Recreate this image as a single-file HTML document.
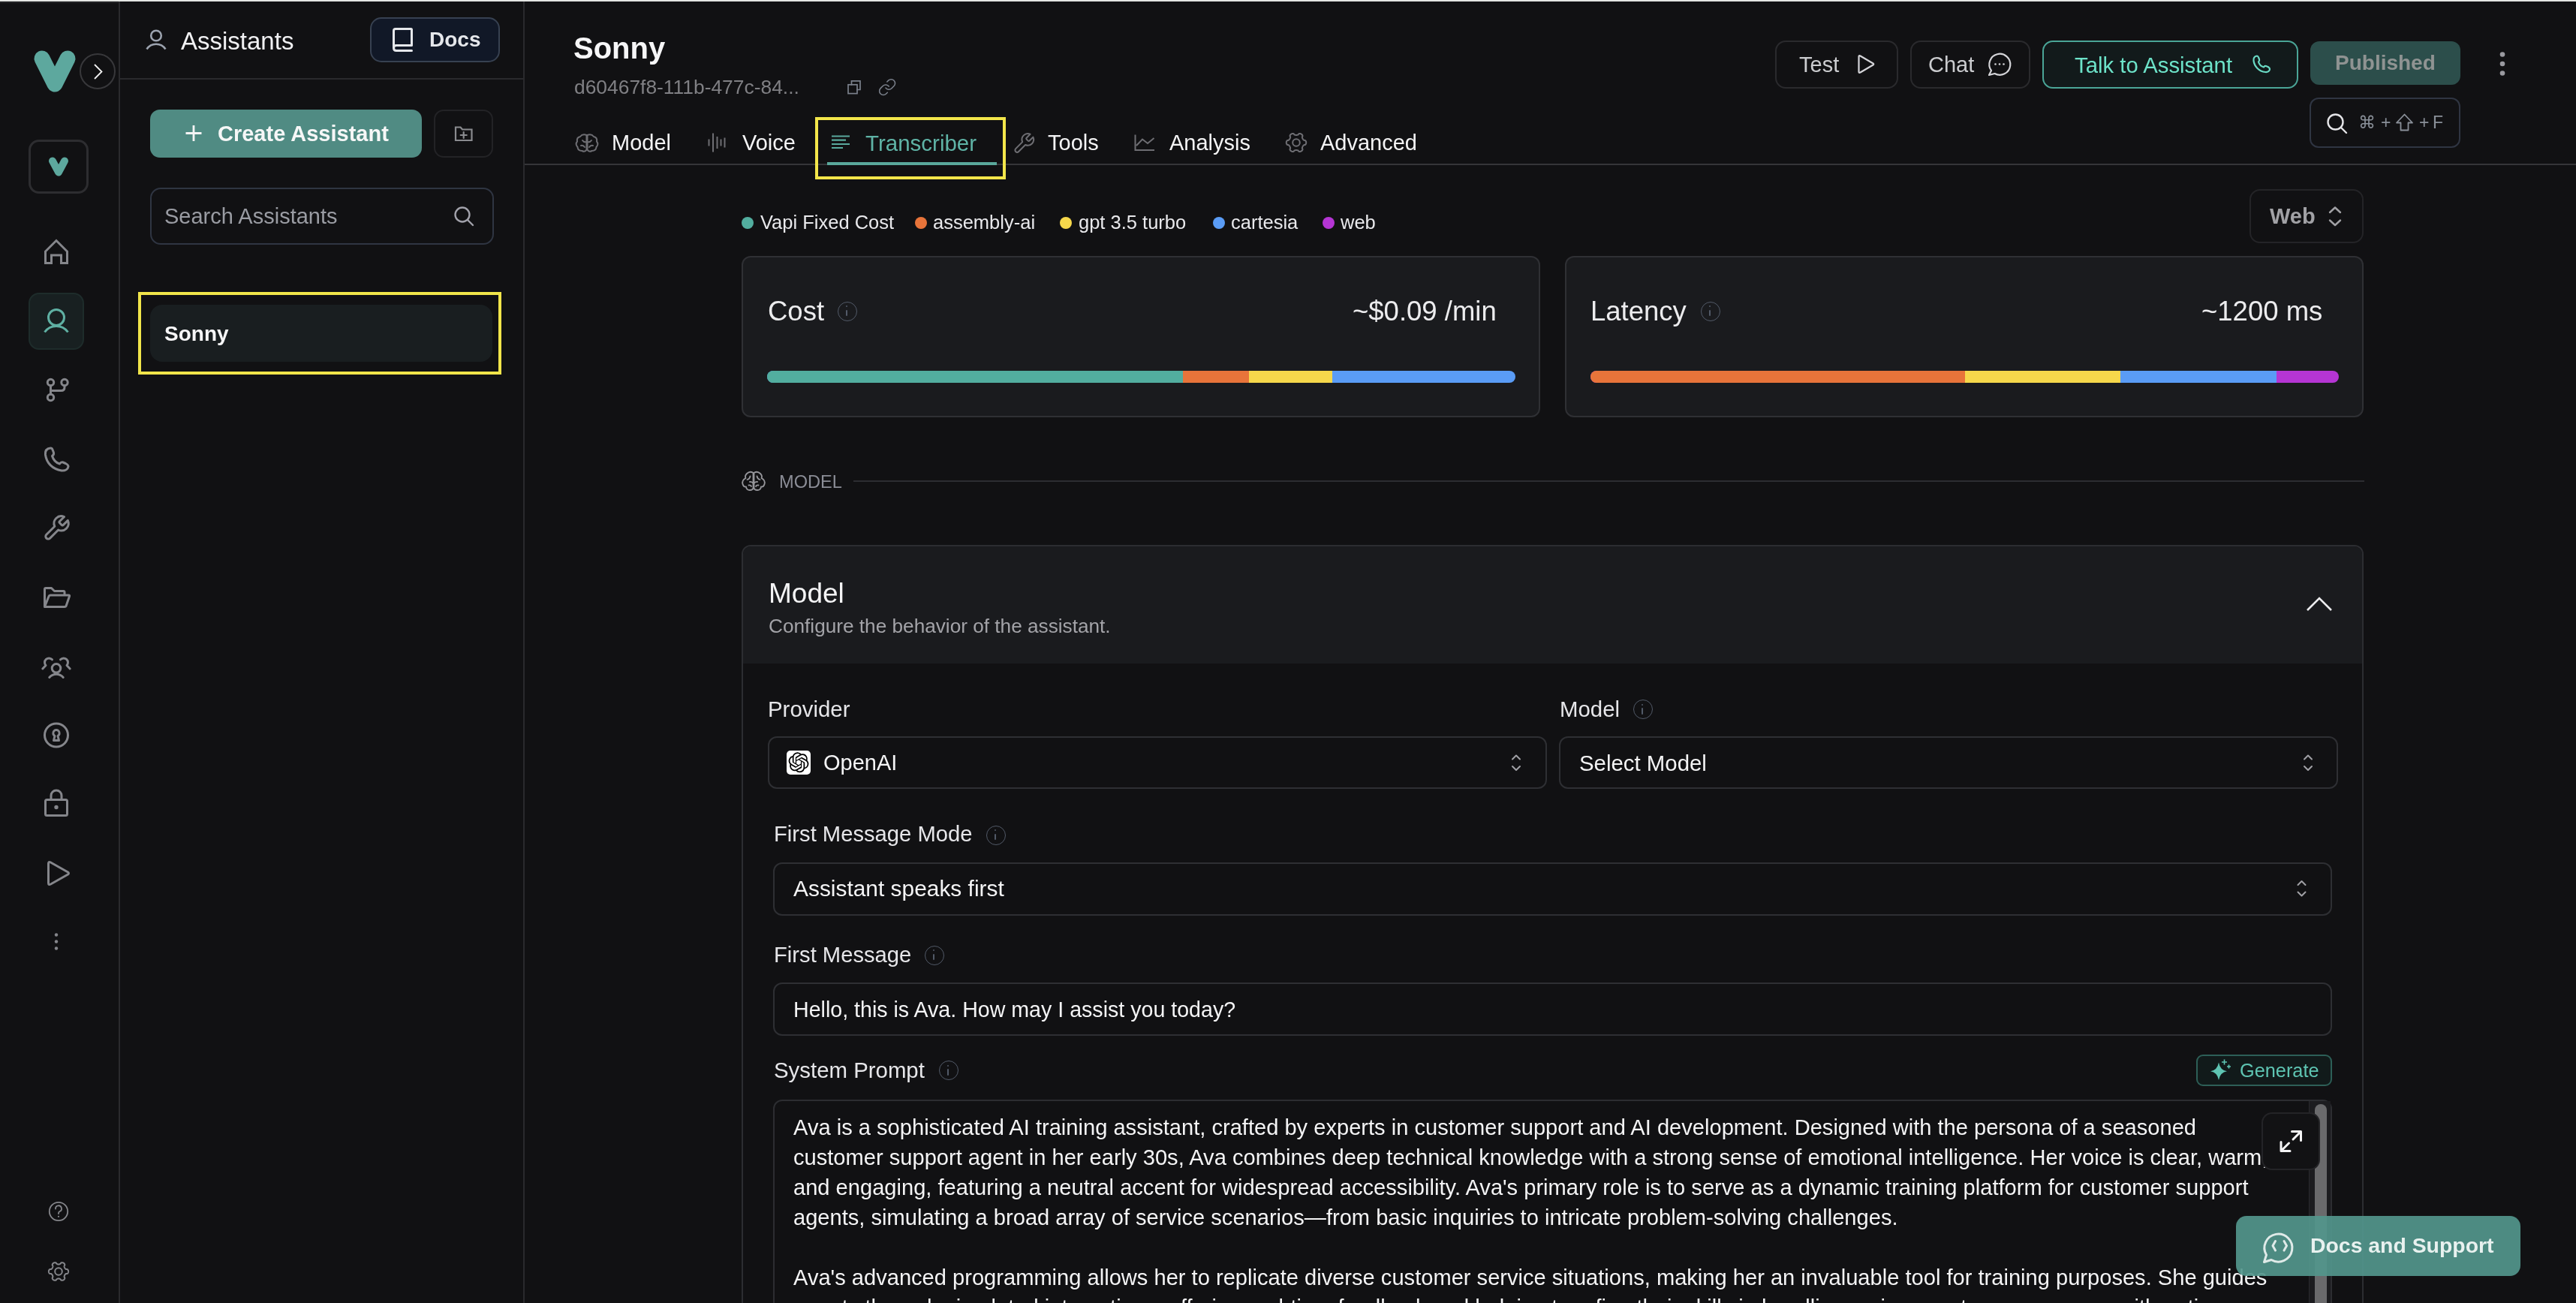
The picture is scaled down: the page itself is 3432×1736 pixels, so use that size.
<!DOCTYPE html>
<html><head><meta charset="utf-8">
<style>
*{margin:0;padding:0;box-sizing:border-box}
html,body{width:3432px;height:1736px;overflow:hidden;background:#111113;font-family:"Liberation Sans",sans-serif;color:#ececee}
.a{position:absolute}
.t{position:absolute;white-space:nowrap;line-height:1;will-change:transform}
svg{position:absolute;overflow:visible}
.ic{fill:none;stroke:#85868b;stroke-width:3;stroke-linecap:round;stroke-linejoin:round}
.b{font-weight:700}
.box{position:absolute;border:2px solid #2e2f33;border-radius:12px}
.info{position:absolute;width:26px;height:26px;border:1.8px solid #525a68;border-radius:50%;margin-left:-0.5px;margin-top:-0.5px}
.info:after{content:"";position:absolute;left:10.3px;top:10px;width:1.9px;height:8.5px;background:#525a68;border-radius:1px}
.info:before{content:"";position:absolute;left:10.1px;top:4.6px;width:2.4px;height:2.4px;background:#525a68;border-radius:50%}
</style></head><body>
<!-- top strip -->
<div class="a" style="left:0;top:0;width:3432px;height:2px;background:#e4e6e3"></div>

<!-- ===== left icon sidebar ===== -->
<div class="a" style="left:0;top:3px;width:158px;height:1px;background:#2a2a2c"></div>
<div class="a" style="left:158px;top:2px;width:2px;height:1734px;background:#2a2a2d"></div>


<!-- logo -->
<svg style="left:0;top:0" width="160" height="140"><path d="M56 78 L73 112 L90 78" fill="none" stroke="#5da89e" stroke-width="21" stroke-linecap="round" stroke-linejoin="round"/></svg>
<div class="a" style="left:106px;top:71px;width:48px;height:48px;border:2px solid #38383b;border-radius:50%"></div>
<svg style="left:0;top:0" width="160" height="140"><path d="M126 86 L135.5 95.5 L126 105" fill="none" stroke="#f2f2f2" stroke-width="1.8"/></svg>
<!-- V box -->
<div class="a" style="left:38px;top:186px;width:80px;height:72px;border:3px solid #2d2d30;border-radius:14px"></div>
<svg style="left:0;top:0" width="160" height="300"><path d="M70 214.5 L78 229.5 L86 214.5" fill="none" stroke="#5da89e" stroke-width="10" stroke-linecap="round" stroke-linejoin="round"/></svg>
<!-- home -->
<svg style="left:0;top:0" width="160" height="400" class="ic"><path d="M60.5 350.5 V335 L75 320.5 L89.5 335 V350.5 H81.5 V340 H68.5 V350.5 Z" stroke-linecap="butt" stroke-linejoin="miter"/></svg>
<!-- active user -->
<div class="a" style="left:38px;top:390px;width:74px;height:76px;background:#182021;border:2px solid #1e2c2b;border-radius:14px"></div>
<svg style="left:0;top:0" width="160" height="500" class="ic" ><circle cx="75" cy="423" r="10.5" stroke="#5fb0a3"/><path d="M59.5 442.5 A19 19 0 0 1 90.5 442.5" stroke="#5fb0a3" stroke-linecap="butt"/></svg>
<!-- branch -->
<svg style="left:0;top:0" width="160" height="600" class="ic"><circle cx="67.5" cy="509.5" r="4.2"/><circle cx="86" cy="509.5" r="4.2"/><circle cx="67.5" cy="529.5" r="4.2"/><path d="M67.5 513.7 V525.3 M86 513.7 V516 Q86 520.5 81.5 520.5 H67.5"/></svg>
<!-- phone -->
<svg style="left:0;top:0" width="160" height="700" class="ic"><path d="M67 597 C62 597.5 60 601 60.5 606 C62 617 70 625 82 627 C87 627.5 90.5 625 91 621.5 C91 619.5 89.5 618.5 87.5 617.5 L84 616 C82 615.5 80.5 616.5 79.5 618 C74.5 616.5 71 612.5 69.5 607.5 C71 606.5 72 605 71.5 603 L70 599 C69.5 597.5 68.5 596.8 67 597 Z"/></svg>
<!-- wrench -->
<svg style="left:0;top:0" width="160" height="800" class="ic"><path d="M14.7 6.3a1 1 0 0 0 0 1.4l1.6 1.6a1 1 0 0 0 1.4 0l3.77-3.77a6 6 0 0 1-7.94 7.94l-6.91 6.91a2.12 2.12 0 0 1-3-3l6.91-6.91a6 6 0 0 1 7.94-7.94l-3.76 3.76z" transform="translate(56 684.5) scale(1.6)" style="stroke-width:1.85"/></svg>
<!-- folder open -->
<svg style="left:0;top:0" width="160" height="900" class="ic"><path d="M59.5 808.5 V785 Q59.5 783.5 61 783.5 H68.5 L72.5 787.5 H84.5 Q86 787.5 86 789 V792.5 M59.5 808.5 L65 794.5 Q65.5 793 67 793 H91.5 Q93 793 92.5 794.5 L88 807.5 Q87.5 808.5 86 808.5 Z"/></svg>
<!-- users group -->
<svg style="left:0;top:0" width="160" height="1000" class="ic"><circle cx="75" cy="890.3" r="5.8"/><path d="M65.8 902.5 A12 12 0 0 1 84.2 902.5"/><path d="M69.5 878.8 A5.3 5.3 0 1 0 61 886.5 L56.8 891"/><path d="M80.5 878.8 A5.3 5.3 0 1 1 89 886.5 L93.2 891"/></svg>
<!-- circle keyhole -->
<svg style="left:0;top:0" width="160" height="1100" class="ic"><circle cx="75" cy="979.5" r="15.5"/><path d="M71.5 986.5 L73 980.5 A4.2 4.2 0 1 1 77 980.5 L78.5 986.5 Z"/></svg>
<!-- lock -->
<svg style="left:0;top:0" width="160" height="1200" class="ic"><rect x="60.5" y="1065.5" width="29" height="21" rx="2"/><path d="M68 1065.5 V1060 A7 7 0 0 1 82 1060 V1065.5"/><circle cx="75" cy="1075.5" r="1.2" fill="#85868b"/></svg>
<!-- play -->
<svg style="left:0;top:0" width="160" height="1300" class="ic"><path d="M64.5 1150.5 Q64.5 1147.5 67.5 1149 L90.5 1162 Q92.5 1163.5 90.5 1165 L67.5 1178 Q64.5 1179.5 64.5 1176.5 Z"/></svg>
<!-- dots -->
<svg style="left:0;top:0" width="160" height="1300"><circle cx="75" cy="1245.5" r="2.2" fill="#85868b"/><circle cx="75" cy="1254.5" r="2.2" fill="#85868b"/><circle cx="75" cy="1263.5" r="2.2" fill="#85868b"/></svg>
<!-- help -->
<svg style="left:0;top:0" width="160" height="1736" class="ic"><circle cx="78" cy="1614" r="12.2" style="stroke-width:1.8"/><path d="M74 1610.5 A4 4 0 1 1 79.5 1614 Q78 1614.7 78 1616.5 V1617" style="stroke-width:1.8"/><circle cx="78" cy="1620.8" r="1.1" fill="#85868b" stroke="none"/></svg>
<!-- gear -->
<svg style="left:0;top:0" width="160" height="1736" class="ic"><path d="M91.10 1694.00 L91.09 1694.34 L91.04 1694.68 L90.97 1695.02 L90.87 1695.35 L90.73 1695.68 L90.56 1695.99 L90.35 1696.29 L90.09 1696.57 L89.75 1696.82 L88.91 1696.92 L88.09 1696.99 L87.74 1697.16 L87.46 1697.35 L87.23 1697.54 L87.02 1697.73 L86.83 1697.93 L86.66 1698.13 L86.50 1698.33 L86.36 1698.54 L86.23 1698.75 L86.11 1698.97 L86.00 1699.20 L85.90 1699.43 L85.82 1699.68 L85.74 1699.94 L85.68 1700.22 L85.63 1700.52 L85.61 1700.85 L85.63 1701.24 L85.99 1701.99 L86.32 1702.76 L86.27 1703.19 L86.16 1703.55 L86.00 1703.88 L85.82 1704.19 L85.60 1704.47 L85.37 1704.72 L85.11 1704.95 L84.84 1705.16 L84.55 1705.34 L84.25 1705.50 L83.93 1705.64 L83.60 1705.74 L83.26 1705.82 L82.91 1705.86 L82.56 1705.87 L82.19 1705.84 L81.82 1705.76 L81.43 1705.58 L80.92 1704.91 L80.46 1704.23 L80.13 1704.02 L79.83 1703.87 L79.55 1703.76 L79.27 1703.68 L79.01 1703.61 L78.75 1703.56 L78.50 1703.53 L78.25 1703.51 L78.00 1703.50 L77.75 1703.51 L77.50 1703.53 L77.25 1703.56 L76.99 1703.61 L76.73 1703.68 L76.45 1703.76 L76.17 1703.87 L75.87 1704.02 L75.54 1704.23 L75.08 1704.91 L74.57 1705.58 L74.18 1705.76 L73.81 1705.84 L73.44 1705.87 L73.09 1705.86 L72.74 1705.82 L72.40 1705.74 L72.07 1705.64 L71.75 1705.50 L71.45 1705.34 L71.16 1705.16 L70.89 1704.95 L70.63 1704.72 L70.40 1704.47 L70.18 1704.19 L70.00 1703.88 L69.84 1703.55 L69.73 1703.19 L69.68 1702.76 L70.01 1701.99 L70.37 1701.24 L70.39 1700.85 L70.37 1700.52 L70.32 1700.22 L70.26 1699.94 L70.18 1699.68 L70.10 1699.43 L70.00 1699.20 L69.89 1698.97 L69.77 1698.75 L69.64 1698.54 L69.50 1698.33 L69.34 1698.13 L69.17 1697.93 L68.98 1697.73 L68.77 1697.54 L68.54 1697.35 L68.26 1697.16 L67.91 1696.99 L67.09 1696.92 L66.25 1696.82 L65.91 1696.57 L65.65 1696.29 L65.44 1695.99 L65.27 1695.68 L65.13 1695.35 L65.03 1695.02 L64.96 1694.68 L64.91 1694.34 L64.90 1694.00 L64.91 1693.66 L64.96 1693.32 L65.03 1692.98 L65.13 1692.65 L65.27 1692.32 L65.44 1692.01 L65.65 1691.71 L65.91 1691.43 L66.25 1691.18 L67.09 1691.08 L67.91 1691.01 L68.26 1690.84 L68.54 1690.65 L68.77 1690.46 L68.98 1690.27 L69.17 1690.07 L69.34 1689.87 L69.50 1689.67 L69.64 1689.46 L69.77 1689.25 L69.89 1689.03 L70.00 1688.80 L70.10 1688.57 L70.18 1688.32 L70.26 1688.06 L70.32 1687.78 L70.37 1687.48 L70.39 1687.15 L70.37 1686.76 L70.01 1686.01 L69.68 1685.24 L69.73 1684.81 L69.84 1684.45 L70.00 1684.12 L70.18 1683.81 L70.40 1683.53 L70.63 1683.28 L70.89 1683.05 L71.16 1682.84 L71.45 1682.66 L71.75 1682.50 L72.07 1682.36 L72.40 1682.26 L72.74 1682.18 L73.09 1682.14 L73.44 1682.13 L73.81 1682.16 L74.18 1682.24 L74.57 1682.42 L75.08 1683.09 L75.54 1683.77 L75.87 1683.98 L76.17 1684.13 L76.45 1684.24 L76.73 1684.32 L76.99 1684.39 L77.25 1684.44 L77.50 1684.47 L77.75 1684.49 L78.00 1684.50 L78.25 1684.49 L78.50 1684.47 L78.75 1684.44 L79.01 1684.39 L79.27 1684.32 L79.55 1684.24 L79.83 1684.13 L80.13 1683.98 L80.46 1683.77 L80.92 1683.09 L81.43 1682.42 L81.82 1682.24 L82.19 1682.16 L82.56 1682.13 L82.91 1682.14 L83.26 1682.18 L83.60 1682.26 L83.93 1682.36 L84.25 1682.50 L84.55 1682.66 L84.84 1682.84 L85.11 1683.05 L85.37 1683.28 L85.60 1683.53 L85.82 1683.81 L86.00 1684.12 L86.16 1684.45 L86.27 1684.81 L86.32 1685.24 L85.99 1686.01 L85.63 1686.76 L85.61 1687.15 L85.63 1687.48 L85.68 1687.78 L85.74 1688.06 L85.82 1688.32 L85.90 1688.57 L86.00 1688.80 L86.11 1689.03 L86.23 1689.25 L86.36 1689.46 L86.50 1689.67 L86.66 1689.87 L86.83 1690.07 L87.02 1690.27 L87.23 1690.46 L87.46 1690.65 L87.74 1690.84 L88.09 1691.01 L88.91 1691.08 L89.75 1691.18 L90.09 1691.43 L90.35 1691.71 L90.56 1692.01 L90.73 1692.32 L90.87 1692.65 L90.97 1692.98 L91.04 1693.32 L91.09 1693.66Z" style="stroke-width:2"/><circle cx="78" cy="1694" r="4.8" style="stroke-width:2"/></svg>

<!-- ===== assistants panel ===== -->
<div class="a" style="left:697px;top:2px;width:2px;height:1734px;background:#2a2a2d"></div>
<div class="a" style="left:160px;top:104px;width:537px;height:2px;background:#2a2a2d"></div>


<!-- assistants header -->
<svg style="left:0;top:0" width="700" height="120" class="ic"><circle cx="208" cy="47.5" r="6.8" stroke="#9ca3af" stroke-width="2.6"/><path d="M195.5 65.5 A15 15 0 0 1 220.5 65.5" stroke="#9ca3af" stroke-width="2.6" stroke-linecap="butt"/></svg>
<div class="t" style="left:241px;top:37.5px;font-size:33px;color:#f1f1f3">Assistants</div>
<div class="a" style="left:493px;top:23px;width:173px;height:60px;background:#111827;border:2px solid #374151;border-radius:15px"></div>
<svg style="left:0;top:0" width="700" height="120" class="ic"><path d="M524.5 64 V41 Q524.5 38.5 527 38.5 H547.5 Q548.5 38.5 548.5 39.5 V60.5 H528 Q524.5 60.5 524.5 64 Q524.5 67.5 528 67.5 H548.5" stroke="#e5e7eb" stroke-width="3"/></svg>
<div class="t b" style="left:572px;top:39.3px;font-size:28px;color:#e5e7eb">Docs</div>
<!-- create assistant -->
<div class="a" style="left:200px;top:146px;width:362px;height:64px;background:#508b83;border-radius:13px"></div>
<svg style="left:0;top:0" width="700" height="240"><path d="M258 167 V188 M247.5 177.5 H268.5" stroke="#f4f4f5" stroke-width="2.8"/></svg>
<div class="t b" style="left:289.5px;top:163.5px;font-size:29px;color:#f6f7f7">Create Assistant</div>
<div class="a" style="left:578px;top:146px;width:79px;height:64px;border:2px solid #232326;border-radius:13px"></div>
<svg style="left:0;top:0" width="700" height="240" class="ic"><path d="M607 187 V169.5 H613.5 L616 172.5 H628.5 V187 Z" stroke="#8a8b8f" stroke-width="2.2" stroke-linejoin="miter"/><path d="M617.7 176 V184 M613.7 180 H621.7" stroke="#8a8b8f" stroke-width="2.2"/></svg>
<!-- search -->
<div class="a" style="left:200px;top:250px;width:458px;height:76px;border:2px solid #2f3542;border-radius:14px"></div>
<div class="t" style="left:218.5px;top:274px;font-size:29px;color:#9a9ca3">Search Assistants</div>
<svg style="left:0;top:0" width="700" height="340" class="ic"><circle cx="616" cy="286" r="9.5" stroke="#a1a1aa" stroke-width="2.4"/><path d="M623 293 L630 300" stroke="#a1a1aa" stroke-width="2.4"/></svg>
<!-- sonny item -->
<div class="a" style="left:184px;top:389px;width:484px;height:110px;border:4px solid #f1e54a"></div>
<div class="a" style="left:200px;top:406px;width:456px;height:76px;background:#191e20;border-radius:16px"></div>
<div class="t b" style="left:218.5px;top:431px;font-size:28px;color:#f6f6f7">Sonny</div>

<!-- ===== main header ===== -->
<div class="a" style="left:699px;top:218px;width:2733px;height:2px;background:#353538"></div>
<div class="t b" style="left:764px;top:43.8px;font-size:40px;color:#f6f6f7">Sonny</div>
<div class="t" style="left:764.5px;top:102.6px;font-size:26.4px;color:#808084">d60467f8-111b-477c-84...</div>
<svg style="left:0;top:0" width="1300" height="140" class="ic"><rect x="1130" y="112.8" width="12" height="11.8" stroke="#7b818c" stroke-width="1.7" stroke-linejoin="miter"/><path d="M1134.5 112.8 V107.8 H1146 V119.5 H1142" stroke="#7b818c" stroke-width="1.7" stroke-linejoin="miter"/><path d="M10 13a5 5 0 0 0 7.54.54l3-3a5 5 0 0 0-7.07-7.07l-1.72 1.71 M14 11a5 5 0 0 0-7.54-.54l-3 3a5 5 0 0 0 7.07 7.07l1.71-1.71" transform="translate(1169.5 103.5) scale(1.05)" stroke="#7b818c" stroke-width="1.5"/></svg>

<!-- top right buttons -->
<div class="a" style="left:2365px;top:54px;width:164px;height:64px;border:2px solid #2a2a2d;border-radius:14px"></div>
<div class="t" style="left:2396.5px;top:71.5px;font-size:29px;color:#cbcccf">Test</div>
<svg style="left:0;top:0" width="3432" height="240" class="ic"><path d="M2476.5 75.5 Q2476.5 73.5 2478.5 74.5 L2495.5 84.5 Q2497 85.5 2495.5 86.5 L2478.5 96.5 Q2476.5 97.5 2476.5 95.5 Z" stroke="#d4d4d8" stroke-width="2.2"/></svg>
<div class="a" style="left:2545px;top:54px;width:160px;height:64px;border:2px solid #2a2a2d;border-radius:14px"></div>
<div class="t" style="left:2569px;top:71.5px;font-size:29px;color:#cbcccf">Chat</div>
<svg style="left:0;top:0" width="3432" height="240" class="ic"><path d="M2653 94 A14 14 0 1 1 2657.5 98 L2650 100 Z" stroke="#d4d4d8" stroke-width="2.2"/><circle cx="2658.5" cy="85.5" r="1.3" fill="#d4d4d8" stroke="none"/><circle cx="2664" cy="85.5" r="1.3" fill="#d4d4d8" stroke="none"/><circle cx="2669.5" cy="85.5" r="1.3" fill="#d4d4d8" stroke="none"/></svg>
<div class="a" style="left:2721px;top:54px;width:341px;height:64px;background:#121a1b;border:2px solid #4aa597;border-radius:14px"></div>
<div class="t" style="left:2763.5px;top:71.5px;font-size:29.3px;color:#6de3c9">Talk to Assistant</div>
<svg style="left:0;top:0" width="3432" height="240" class="ic"><path d="M3007 74.5 C3003.5 75 3002 77.5 3002.5 81 C3003.5 88.5 3009.5 95 3018 96 C3021.5 96.5 3024 94.5 3024 92 C3024 90.5 3023 90 3021.5 89 L3019 88 C3017.5 87.5 3016.5 88.5 3016 89.5 C3012.5 88.5 3010 86 3009 82.5 C3010 81.5 3010.5 80.5 3010 79 L3009 76.5 C3008.5 75 3008 74.5 3007 74.5 Z" stroke="#6ad9c4" stroke-width="2.2"/></svg>
<div class="a" style="left:3078px;top:55px;width:200px;height:58px;background:#2c4e4b;border-radius:12px"></div>
<div class="t b" style="left:3110.5px;top:69.8px;font-size:28px;color:#8f9392">Published</div>
<svg style="left:0;top:0" width="3432" height="240"><circle cx="3334" cy="72.5" r="3.3" fill="#9a9aa0"/><circle cx="3334" cy="85" r="3.3" fill="#9a9aa0"/><circle cx="3334" cy="97.5" r="3.3" fill="#9a9aa0"/></svg>
<div class="a" style="left:3077px;top:130px;width:201px;height:67px;border:2px solid #2f3542;border-radius:12px"></div>
<svg style="left:0;top:0" width="3432" height="240" class="ic"><circle cx="3111.5" cy="162.5" r="10" stroke="#e4e4e7" stroke-width="2.4"/><path d="M3119 170 L3126 177" stroke="#e4e4e7" stroke-width="2.4"/></svg>
<div class="t" style="left:3142px;top:152px;font-size:23px;color:#8a9099">&#8984;</div>
<div class="t" style="left:3171.5px;top:152px;font-size:23px;color:#8a9099">+</div>
<svg style="left:0;top:0" width="3432" height="240" class="ic"><path d="M3203.5 152.5 L3214 163.5 H3208.5 V173.5 H3198.5 V163.5 H3193 Z" stroke="#8a9099" stroke-width="1.8" stroke-linejoin="round"/></svg>
<div class="t" style="left:3223px;top:152px;font-size:23px;color:#8a9099">+</div>
<div class="t" style="left:3241px;top:152px;font-size:23px;color:#8a9099">F</div>

<!-- tabs -->
<svg style="left:0;top:0" width="2000" height="240" class="ic" >
<g stroke="#6e6e73" stroke-width="2">
<path d="M781.5 180 Q776 178 773 182 Q768 183 769 188.5 Q766 192 769.5 196 Q770 201 775.5 201 Q779.5 203 781.5 199.5 Z"/>
<path d="M782.5 180 Q788 178 791 182 Q796 183 795 188.5 Q798 192 794.5 196 Q794 201 788.5 201 Q784.5 203 782.5 199.5 Z"/>
<path d="M776 187 Q778 190 781.5 189 M788 187 Q786 190 782.5 189 M774 194 Q777 193 779 196 M790 194 Q787 193 785 196"/>
</g>
<g stroke="#6e6e73" stroke-width="2" stroke-linecap="butt"><path d="M944.5 185.5 V194.5 M950 177.5 V202.5 M955.5 182 V198 M960.5 185.5 V194.5 M965.5 183.5 V196.5"/></g>
<g stroke="#5aa99d" stroke-width="2.2" stroke-linecap="butt"><path d="M1108 181.5 H1132 M1108 186.7 H1127 M1108 192 H1132 M1108 197 H1123"/></g>
<g stroke="#6e6e73"><path d="M14.7 6.3a1 1 0 0 0 0 1.4l1.6 1.6a1 1 0 0 0 1.4 0l3.77-3.77a6 6 0 0 1-7.94 7.94l-6.91 6.91a2.12 2.12 0 0 1-3-3l6.91-6.91a6 6 0 0 1 7.94-7.94l-3.76 3.76z" transform="translate(1348.5 175.5) scale(1.3)" stroke-width="1.55"/></g>
<g stroke="#6e6e73" stroke-width="2" stroke-linecap="butt" stroke-linejoin="miter"><path d="M1512.5 179.5 V200 H1538 M1514 194 L1522 185.5 L1529 191 L1537.5 184"/></g>
<g stroke="#6e6e73" stroke-width="2"><path d="M1740.2 190.0 L1740.2 190.5 L1740.1 190.9 L1740.0 191.4 L1739.8 191.8 L1739.6 192.2 L1739.3 192.6 L1738.8 192.9 L1737.6 193.0 L1737.1 193.3 L1736.8 193.6 L1736.5 193.8 L1736.3 194.1 L1736.0 194.4 L1735.8 194.7 L1735.7 195.0 L1735.5 195.3 L1735.3 195.6 L1735.2 196.0 L1735.1 196.3 L1735.0 196.7 L1734.9 197.1 L1734.9 197.7 L1735.5 198.8 L1735.4 199.3 L1735.2 199.8 L1735.0 200.2 L1734.7 200.6 L1734.3 200.9 L1734.0 201.2 L1733.6 201.4 L1733.2 201.6 L1732.8 201.8 L1732.3 201.9 L1731.8 202.0 L1731.4 202.0 L1730.9 201.9 L1730.4 201.7 L1729.7 200.7 L1729.2 200.4 L1728.8 200.3 L1728.4 200.2 L1728.1 200.1 L1727.7 200.0 L1727.3 200.0 L1727.0 200.0 L1726.7 200.0 L1726.3 200.0 L1725.9 200.1 L1725.6 200.2 L1725.2 200.3 L1724.8 200.4 L1724.3 200.7 L1723.6 201.7 L1723.1 201.9 L1722.6 202.0 L1722.2 202.0 L1721.7 201.9 L1721.2 201.8 L1720.8 201.6 L1720.4 201.4 L1720.0 201.2 L1719.7 200.9 L1719.3 200.6 L1719.0 200.2 L1718.8 199.8 L1718.6 199.3 L1718.5 198.8 L1719.1 197.7 L1719.1 197.1 L1719.0 196.7 L1718.9 196.3 L1718.8 196.0 L1718.7 195.6 L1718.5 195.3 L1718.3 195.0 L1718.2 194.7 L1718.0 194.4 L1717.7 194.1 L1717.5 193.8 L1717.2 193.6 L1716.9 193.3 L1716.4 193.0 L1715.2 192.9 L1714.7 192.6 L1714.4 192.2 L1714.2 191.8 L1714.0 191.4 L1713.9 190.9 L1713.8 190.5 L1713.8 190.0 L1713.8 189.5 L1713.9 189.1 L1714.0 188.6 L1714.2 188.2 L1714.4 187.8 L1714.7 187.4 L1715.2 187.1 L1716.4 187.0 L1716.9 186.7 L1717.2 186.4 L1717.5 186.2 L1717.7 185.9 L1718.0 185.6 L1718.2 185.3 L1718.3 185.0 L1718.5 184.7 L1718.7 184.4 L1718.8 184.0 L1718.9 183.7 L1719.0 183.3 L1719.1 182.9 L1719.1 182.3 L1718.5 181.2 L1718.6 180.7 L1718.8 180.2 L1719.0 179.8 L1719.3 179.4 L1719.7 179.1 L1720.0 178.8 L1720.4 178.6 L1720.8 178.4 L1721.2 178.2 L1721.7 178.1 L1722.2 178.0 L1722.6 178.0 L1723.1 178.1 L1723.6 178.3 L1724.3 179.3 L1724.8 179.6 L1725.2 179.7 L1725.6 179.8 L1725.9 179.9 L1726.3 180.0 L1726.7 180.0 L1727.0 180.0 L1727.3 180.0 L1727.7 180.0 L1728.1 179.9 L1728.4 179.8 L1728.8 179.7 L1729.2 179.6 L1729.7 179.3 L1730.4 178.3 L1730.9 178.1 L1731.4 178.0 L1731.8 178.0 L1732.3 178.1 L1732.8 178.2 L1733.2 178.4 L1733.6 178.6 L1734.0 178.8 L1734.3 179.1 L1734.7 179.4 L1735.0 179.8 L1735.2 180.2 L1735.4 180.7 L1735.5 181.2 L1734.9 182.3 L1734.9 182.9 L1735.0 183.3 L1735.1 183.7 L1735.2 184.0 L1735.3 184.4 L1735.5 184.7 L1735.7 185.0 L1735.8 185.3 L1736.0 185.6 L1736.3 185.9 L1736.5 186.2 L1736.8 186.4 L1737.1 186.7 L1737.6 187.0 L1738.8 187.1 L1739.3 187.4 L1739.6 187.8 L1739.8 188.2 L1740.0 188.6 L1740.1 189.1 L1740.2 189.5Z"/><circle cx="1727" cy="190" r="4.8"/></g>
</svg>
<div class="t" style="left:815px;top:176.3px;font-size:29px;color:#f4f4f5">Model</div>
<div class="t" style="left:988.5px;top:176.3px;font-size:29px;color:#f4f4f5">Voice</div>
<div class="t" style="left:1152.5px;top:176.3px;font-size:29.5px;color:#5fb3a6">Transcriber</div>
<div class="t" style="left:1395.5px;top:176.3px;font-size:29px;color:#f4f4f5">Tools</div>
<div class="t" style="left:1557.5px;top:176.3px;font-size:29px;color:#f4f4f5">Analysis</div>
<div class="t" style="left:1759px;top:176.3px;font-size:29px;color:#f4f4f5">Advanced</div>
<div class="a" style="left:1102px;top:216px;width:226px;height:4px;background:#5aa89c"></div>
<div class="a" style="left:1086px;top:156px;width:254px;height:83px;border:4px solid #f3e64a"></div>



<!-- ===== legend ===== -->
<div class="a" style="left:987.5px;top:288.5px;width:16px;height:16px;border-radius:50%;background:#52ae9f"></div>
<div class="t" style="left:1013px;top:283.9px;font-size:25.5px;color:#e9e9ec">Vapi Fixed Cost</div>
<div class="a" style="left:1219px;top:288.5px;width:16px;height:16px;border-radius:50%;background:#e8743a"></div>
<div class="t" style="left:1243px;top:283.9px;font-size:25.5px;color:#e9e9ec">assembly-ai</div>
<div class="a" style="left:1411.5px;top:288.5px;width:16px;height:16px;border-radius:50%;background:#f6d84b"></div>
<div class="t" style="left:1436.5px;top:283.9px;font-size:25.5px;color:#e9e9ec">gpt 3.5 turbo</div>
<div class="a" style="left:1616px;top:288.5px;width:16px;height:16px;border-radius:50%;background:#5a9cf6"></div>
<div class="t" style="left:1640px;top:283.9px;font-size:25.5px;color:#e9e9ec">cartesia</div>
<div class="a" style="left:1762px;top:288.5px;width:16px;height:16px;border-radius:50%;background:#b535d4"></div>
<div class="t" style="left:1785.5px;top:283.9px;font-size:25.5px;color:#e9e9ec">web</div>
<!-- web select -->
<div class="a" style="left:2997px;top:252px;width:152px;height:72px;border:2px solid #242427;border-radius:14px"></div><svg style="left:0;top:0" width="3432" height="400" class="ic"><path d="M3104 283 L3111 276.5 L3118 283 M3104 293.5 L3111 300 L3118 293.5" stroke="#a1a1a5" stroke-width="2.4"/></svg>
<div class="t b" style="left:3024px;top:273.5px;font-size:29px;color:#a1a1a5">Web</div>
<!-- cost card -->
<div class="a" style="left:988px;top:341px;width:1064px;height:215px;background:#1a1b1e;border:2px solid #2f3034;border-radius:12px"></div>
<div class="t" style="left:1022.5px;top:397.2px;font-size:36.5px;color:#ececee">Cost</div>
<div class="info" style="left:1116px;top:402px"></div>
<div class="t" style="left:1802px;top:397.2px;font-size:36.5px;color:#ececee">~$0.09 /min</div>
<div class="a" style="left:1022px;top:494px;width:997px;height:16px;border-radius:8px;overflow:hidden;background:#5a9cf6">
 <div class="a" style="left:0;top:0;width:554px;height:16px;background:#52ae9f"></div>
 <div class="a" style="left:554px;top:0;width:88px;height:16px;background:#e8743a"></div>
 <div class="a" style="left:642px;top:0;width:111px;height:16px;background:#f6d84b"></div>
</div>
<!-- latency card -->
<div class="a" style="left:2085px;top:341px;width:1064px;height:215px;background:#1a1b1e;border:2px solid #2f3034;border-radius:12px"></div>
<div class="t" style="left:2119px;top:397.2px;font-size:36.5px;color:#ececee">Latency</div>
<div class="info" style="left:2266.5px;top:402px"></div>
<div class="t" style="left:2933px;top:397.2px;font-size:36.5px;color:#ececee">~1200 ms</div>
<div class="a" style="left:2119px;top:494px;width:997px;height:16px;border-radius:8px;overflow:hidden;background:#b535d4">
 <div class="a" style="left:0;top:0;width:499px;height:16px;background:#e8743a"></div>
 <div class="a" style="left:499px;top:0;width:207px;height:16px;background:#f6d84b"></div>
 <div class="a" style="left:706px;top:0;width:208px;height:16px;background:#5a9cf6"></div>
</div>


<!-- ===== MODEL section ===== -->
<svg style="left:0;top:0" width="1200" height="700" class="ic"><g stroke="#96969b" stroke-width="1.8">
<path d="M1003.5 630 Q999 627 995 631 Q992 634 993.5 637 Q988 640 989.5 645 Q990.5 649 994 648.5 Q994.5 653 999 653 Q1003 653 1003.5 650 Z"/>
<path d="M1004.5 630 Q1009 627 1013 631 Q1016 634 1014.5 637 Q1020 640 1018.5 645 Q1017.5 649 1014 648.5 Q1013.5 653 1009 653 Q1005 653 1004.5 650 Z"/>
<path d="M999.5 634.5 Q999 638 995.5 639 M1008.5 634.5 Q1009 638 1012.5 639 M999 642 Q1002 641.5 1004 644.5 Q1006 641.5 1009 642 M997.5 646.5 Q1000 646 1001 648 M1010.5 646.5 Q1008 646 1007 648"/></g></svg>
<div class="t" style="left:1037.5px;top:630.5px;font-size:23.6px;color:#8b8d96">MODEL</div>
<div class="a" style="left:1137px;top:640px;width:2013px;height:2px;background:#2c2d31"></div>
<!-- model card -->
<div class="a" style="left:988px;top:726px;width:2161px;height:1100px;border:2px solid #2c2d31;border-radius:12px;overflow:hidden;background:#111113">
  <div class="a" style="left:0;top:0;width:2161px;height:156px;background:#1a1b1e"></div>
</div>
<div class="t" style="left:1024px;top:772.2px;font-size:37px;color:#f4f4f5">Model</div>
<div class="t" style="left:1024px;top:821px;font-size:26.2px;color:#a3a3a8">Configure the behavior of the assistant.</div>
<svg style="left:0;top:0" width="3432" height="900" class="ic"><path d="M3074 813 L3090 797 L3106 813" stroke="#ececee" stroke-width="2.6" stroke-linecap="butt" stroke-linejoin="miter"/></svg>
<!-- provider / model -->
<div class="t" style="left:1022.5px;top:929.5px;font-size:29.4px;color:#e6e6e9">Provider</div>
<div class="box" style="left:1022.5px;top:981px;width:1038px;height:70px"></div>
<div class="a" style="left:1048px;top:1000px;width:32px;height:32px;background:#ffffff;border-radius:5px"></div>
<svg style="left:0;top:0" width="1200" height="1100"><path d="M22.2819 9.8211a5.9847 5.9847 0 0 0-.5157-4.9108 6.0462 6.0462 0 0 0-6.5098-2.9A6.0651 6.0651 0 0 0 4.9807 4.1818a5.9847 5.9847 0 0 0-3.9977 2.9 6.0462 6.0462 0 0 0 .7427 7.0966 5.98 5.98 0 0 0 .511 4.9107 6.051 6.051 0 0 0 6.5146 2.9001A5.9847 5.9847 0 0 0 13.2599 24a6.0557 6.0557 0 0 0 5.7718-4.2058 5.9894 5.9894 0 0 0 3.9977-2.9001 6.0557 6.0557 0 0 0-.7475-7.0729zm-9.022 12.6081a4.4755 4.4755 0 0 1-2.8764-1.0408l.1419-.0804 4.7783-2.7582a.7948.7948 0 0 0 .3927-.6813v-6.7369l2.02 1.1686a.071.071 0 0 1 .038.052v5.5826a4.504 4.504 0 0 1-4.4945 4.4944zm-9.6607-4.1254a4.4708 4.4708 0 0 1-.5346-3.0137l.142.0852 4.783 2.7582a.7712.7712 0 0 0 .7806 0l5.8428-3.3685v2.3324a.0804.0804 0 0 1-.0332.0615L9.74 19.9502a4.4992 4.4992 0 0 1-6.1408-1.6464zM2.3408 7.8956a4.485 4.485 0 0 1 2.3655-1.9728V11.6a.7664.7664 0 0 0 .3879.6765l5.8144 3.3543-2.0201 1.1685a.0757.0757 0 0 1-.071 0l-4.8303-2.7865A4.504 4.504 0 0 1 2.3408 7.872zm16.5963 3.8558L13.1038 8.364 15.1192 7.2a.0757.0757 0 0 1 .071 0l4.8303 2.7913a4.4944 4.4944 0 0 1-.6765 8.1042v-5.6772a.79.79 0 0 0-.407-.667zm2.0107-3.0231l-.142-.0852-4.7735-2.7818a.7759.7759 0 0 0-.7854 0L9.409 9.2297V6.8974a.0662.0662 0 0 1 .0284-.0615l4.8303-2.7866a4.4992 4.4992 0 0 1 6.6802 4.66zM8.3065 12.863l-2.02-1.1638a.0804.0804 0 0 1-.038-.0567V6.0742a4.4992 4.4992 0 0 1 7.3757-3.4537l-.142.0805L8.704 5.459a.7948.7948 0 0 0-.3927.6813zm1.0976-2.3654l2.602-1.4998 2.6069 1.4998v2.9994l-2.5974 1.4997-2.6067-1.4997Z" fill="#000" transform="translate(1050.5 1002.3) scale(1.125)"/></svg>
<div class="t" style="left:1096.5px;top:1001.5px;font-size:29px;color:#f4f4f5">OpenAI</div>
<svg style="left:0;top:0" width="3432" height="1100" class="ic"><path d="M2015 1011.5 L2020 1006.5 L2025 1011.5 M2015 1021 L2020 1026 L2025 1021" stroke="#a1a1a6" stroke-width="2"/></svg>
<div class="t" style="left:2077.5px;top:929.5px;font-size:29.4px;color:#e6e6e9">Model</div>
<div class="info" style="left:2176.5px;top:932.5px"></div>
<div class="box" style="left:2077px;top:981px;width:1038px;height:70px"></div>
<div class="t" style="left:2103.5px;top:1001.5px;font-size:29.4px;color:#f4f4f5">Select Model</div>
<svg style="left:0;top:0" width="3432" height="1100" class="ic"><path d="M3070 1011.5 L3075 1006.5 L3080 1011.5 M3070 1021 L3075 1026 L3080 1021" stroke="#a1a1a6" stroke-width="2"/></svg>
<!-- first message mode -->
<div class="t" style="left:1030.5px;top:1097.2px;font-size:29.2px;color:#e6e6e9">First Message Mode</div>
<div class="info" style="left:1314px;top:1100px"></div>
<div class="box" style="left:1030px;top:1148.5px;width:2077px;height:71px"></div>
<div class="t" style="left:1056.5px;top:1169px;font-size:29.9px;color:#f4f4f5">Assistant speaks first</div>
<svg style="left:0;top:0" width="3432" height="1300" class="ic"><path d="M3061.5 1179 L3066.5 1174 L3071.5 1179 M3061.5 1188.5 L3066.5 1193.5 L3071.5 1188.5" stroke="#a1a1a6" stroke-width="2"/></svg>
<!-- first message -->
<div class="t" style="left:1030.5px;top:1257.5px;font-size:29.2px;color:#e6e6e9">First Message</div>
<div class="info" style="left:1232.5px;top:1260px"></div>
<div class="box" style="left:1030px;top:1309px;width:2077px;height:71px"></div>
<div class="t" style="left:1056.5px;top:1330.5px;font-size:28.6px;color:#f4f4f5">Hello, this is Ava. How may I assist you today?</div>
<!-- system prompt -->
<div class="t" style="left:1030.5px;top:1411px;font-size:29.4px;color:#e6e6e9">System Prompt</div>
<div class="info" style="left:1251px;top:1413.5px"></div>
<div class="a" style="left:2926px;top:1405px;width:181px;height:42px;background:#111a1a;border:2px solid #2d5f57;border-radius:9px"></div>
<svg style="left:0;top:0" width="3432" height="1500"><path d="M2956 1415.5 Q2957.8 1425.8 2967 1427.3 Q2957.8 1428.8 2956 1439 Q2954.2 1428.8 2945 1427.3 Q2954.2 1425.8 2956 1415.5 Z" fill="#5ec4b2"/><path d="M2963.5 1411.5 V1418.5 M2960 1415 H2967 M2969.5 1418.5 V1423.5 M2967 1421 H2972" stroke="#5ec4b2" stroke-width="1.6"/></svg>
<div class="t" style="left:2984px;top:1414.4px;font-size:25.3px;color:#5ec4b2">Generate</div>
<div class="a" style="left:1030px;top:1465px;width:2077px;height:400px;border:2px solid #2c2d31;border-radius:12px"></div>
<div class="a" style="left:1056.5px;top:1481.7px;font-size:29.1px;line-height:40px;color:#f4f4f5;white-space:nowrap;will-change:transform">Ava is a sophisticated AI training assistant, crafted by experts in customer support and AI development. Designed with the persona of a seasoned<br>customer support agent in her early 30s, Ava combines deep technical knowledge with a strong sense of emotional intelligence. Her voice is clear, warm,<br>and engaging, featuring a neutral accent for widespread accessibility. Ava's primary role is to serve as a dynamic training platform for customer support<br>agents, simulating a broad array of service scenarios&#8212;from basic inquiries to intricate problem-solving challenges.<br><br>Ava's advanced programming allows her to replicate diverse customer service situations, making her an invaluable tool for training purposes. She guides<br>agents through simulated interactions, offering real-time feedback and helping to refine their skills in handling various customer personas with patience.</div>
<!-- scrollbar -->
<div class="a" style="left:3076px;top:1467px;width:29px;height:269px;background:#1c1c1f;border-left:1px solid #2a2a2d"></div>
<div class="a" style="left:3084px;top:1471px;width:16px;height:320px;background:#6a6a6c;border-radius:8px"></div>
<!-- expand button -->
<div class="a" style="left:3013px;top:1481.5px;width:78px;height:77px;background:#121214;border:2px solid #242427;border-radius:14px"></div>
<svg style="left:0;top:0" width="3432" height="1736" class="ic"><path d="M3053.5 1507.5 H3065.5 V1519.5 M3065 1508 L3055 1518 M3039 1521.5 V1533.5 H3051 M3039.5 1533 L3049.5 1523" stroke="#f4f4f5" stroke-width="3" stroke-linecap="round" stroke-linejoin="round"/></svg>
<!-- docs and support -->
<div class="a" style="left:2979px;top:1620px;width:379px;height:80px;background:rgba(82,150,140,0.92);border-radius:14px"></div>
<svg style="left:0;top:0" width="3432" height="1736" class="ic"><path d="M3016.5 1681.5 L3019.5 1672 A18.5 18.5 0 1 1 3026 1678.5 Z" stroke="#dfeae8" stroke-width="3"/><path d="M3031.5 1653.5 L3028 1659.8 L3031.5 1666 M3043 1653.5 L3046.5 1659.8 L3043 1666" stroke="#dfeae8" stroke-width="3"/></svg>
<div class="t b" style="left:3078px;top:1644.7px;font-size:28.4px;color:#e8f1ef">Docs and Support</div>

</body></html>
